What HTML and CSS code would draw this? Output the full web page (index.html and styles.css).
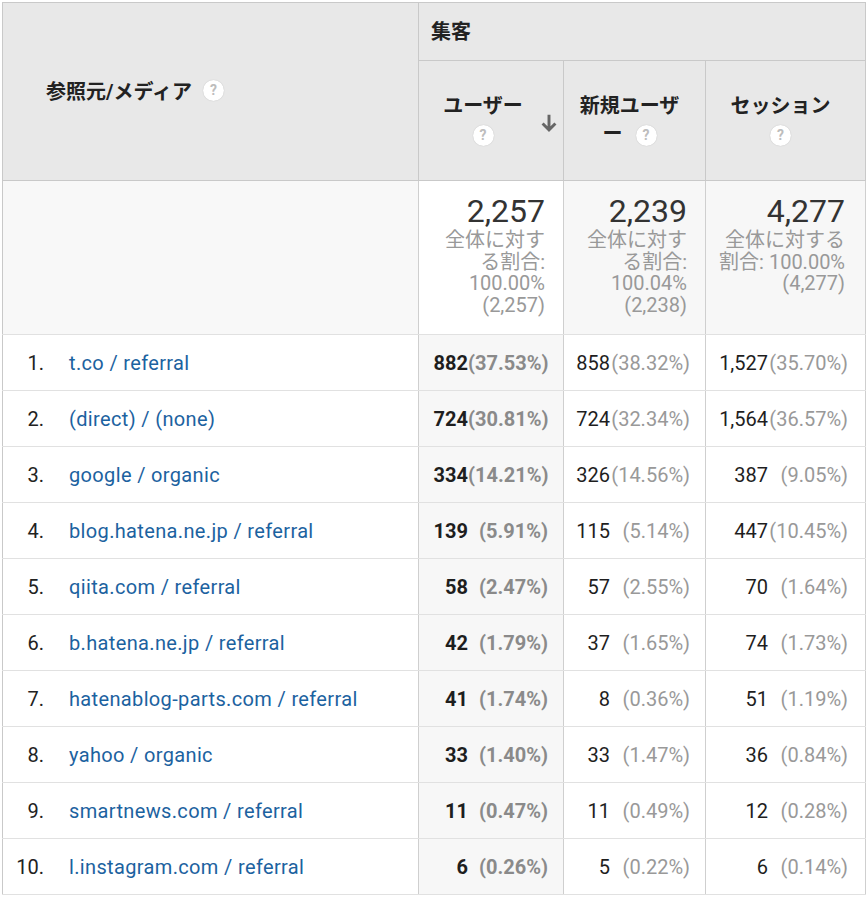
FILE: index.html
```html
<!DOCTYPE html>
<html lang="ja">
<head>
<meta charset="utf-8">
<title>参照元/メディア</title>
<link rel="stylesheet" href="styles.css">
</head>
<body>
<table class="report">
  <colgroup>
    <col class="col-dim">
    <col class="col-users">
    <col class="col-new">
    <col class="col-sessions">
  </colgroup>
  <thead>
    <tr class="head-group">
      <th class="head-dim" rowspan="2"><span class="head-label">参照元/メディア</span><span class="help">?</span></th>
      <th class="head-section" colspan="3">集客</th>
    </tr>
    <tr class="head-metrics">
      <th class="head-metric head-sorted">ユーザー<br><span class="help help-block">?</span><svg class="sort-arrow" viewBox="0 0 24 24" aria-hidden="true"><path d="M12 3V19.5M5 12.5L12 19.5l7-7"/></svg></th>
      <th class="head-metric">新規ユーザ<br>ー<span class="help help-inline">?</span></th>
      <th class="head-metric">セッション<br><span class="help help-block">?</span></th>
    </tr>
  </thead>
  <tbody>
    <tr class="totals">
      <td class="tot-dim"></td>
      <td class="tot-metric tot-sorted"><div class="tot-value">2,257</div><div class="tot-note">全体に対する割合: 100.00% (2,257)</div></td>
      <td class="tot-metric"><div class="tot-value">2,239</div><div class="tot-note">全体に対する割合: 100.04% (2,238)</div></td>
      <td class="tot-metric tot-last"><div class="tot-value">4,277</div><div class="tot-note">全体に対する割合: 100.00% (4,277)</div></td>
    </tr>
    <tr class="row">
      <td class="dim"><span class="rank">1.</span><a class="link" href="#">t.co / referral</a></td>
      <td class="metric sorted"><span class="val">882</span><span class="pct">(37.53%)</span></td>
      <td class="metric"><span class="val">858</span><span class="pct">(38.32%)</span></td>
      <td class="metric last"><span class="val">1,527</span><span class="pct">(35.70%)</span></td>
    </tr>
    <tr class="row">
      <td class="dim"><span class="rank">2.</span><a class="link" href="#">(direct) / (none)</a></td>
      <td class="metric sorted"><span class="val">724</span><span class="pct">(30.81%)</span></td>
      <td class="metric"><span class="val">724</span><span class="pct">(32.34%)</span></td>
      <td class="metric last"><span class="val">1,564</span><span class="pct">(36.57%)</span></td>
    </tr>
    <tr class="row">
      <td class="dim"><span class="rank">3.</span><a class="link" href="#">google / organic</a></td>
      <td class="metric sorted"><span class="val">334</span><span class="pct">(14.21%)</span></td>
      <td class="metric"><span class="val">326</span><span class="pct">(14.56%)</span></td>
      <td class="metric last"><span class="val">387</span><span class="pct">(9.05%)</span></td>
    </tr>
    <tr class="row">
      <td class="dim"><span class="rank">4.</span><a class="link" href="#">blog.hatena.ne.jp / referral</a></td>
      <td class="metric sorted"><span class="val">139</span><span class="pct">(5.91%)</span></td>
      <td class="metric"><span class="val">115</span><span class="pct">(5.14%)</span></td>
      <td class="metric last"><span class="val">447</span><span class="pct">(10.45%)</span></td>
    </tr>
    <tr class="row">
      <td class="dim"><span class="rank">5.</span><a class="link" href="#">qiita.com / referral</a></td>
      <td class="metric sorted"><span class="val">58</span><span class="pct">(2.47%)</span></td>
      <td class="metric"><span class="val">57</span><span class="pct">(2.55%)</span></td>
      <td class="metric last"><span class="val">70</span><span class="pct">(1.64%)</span></td>
    </tr>
    <tr class="row">
      <td class="dim"><span class="rank">6.</span><a class="link" href="#">b.hatena.ne.jp / referral</a></td>
      <td class="metric sorted"><span class="val">42</span><span class="pct">(1.79%)</span></td>
      <td class="metric"><span class="val">37</span><span class="pct">(1.65%)</span></td>
      <td class="metric last"><span class="val">74</span><span class="pct">(1.73%)</span></td>
    </tr>
    <tr class="row">
      <td class="dim"><span class="rank">7.</span><a class="link" href="#">hatenablog-parts.com / referral</a></td>
      <td class="metric sorted"><span class="val">41</span><span class="pct">(1.74%)</span></td>
      <td class="metric"><span class="val">8</span><span class="pct">(0.36%)</span></td>
      <td class="metric last"><span class="val">51</span><span class="pct">(1.19%)</span></td>
    </tr>
    <tr class="row">
      <td class="dim"><span class="rank">8.</span><a class="link" href="#">yahoo / organic</a></td>
      <td class="metric sorted"><span class="val">33</span><span class="pct">(1.40%)</span></td>
      <td class="metric"><span class="val">33</span><span class="pct">(1.47%)</span></td>
      <td class="metric last"><span class="val">36</span><span class="pct">(0.84%)</span></td>
    </tr>
    <tr class="row">
      <td class="dim"><span class="rank">9.</span><a class="link" href="#">smartnews.com / referral</a></td>
      <td class="metric sorted"><span class="val">11</span><span class="pct">(0.47%)</span></td>
      <td class="metric"><span class="val">11</span><span class="pct">(0.49%)</span></td>
      <td class="metric last"><span class="val">12</span><span class="pct">(0.28%)</span></td>
    </tr>
    <tr class="row">
      <td class="dim"><span class="rank">10.</span><a class="link" href="#">l.instagram.com / referral</a></td>
      <td class="metric sorted"><span class="val">6</span><span class="pct">(0.26%)</span></td>
      <td class="metric"><span class="val">5</span><span class="pct">(0.22%)</span></td>
      <td class="metric last"><span class="val">6</span><span class="pct">(0.14%)</span></td>
    </tr>
  </tbody>
</table>
</body>
</html>
```

FILE: styles.css
```css
html, body {
  background: #ffffff;
}

body {
  margin: 0;
  padding: 2px 0 0 2px;
  font-family: Roboto, "Noto Sans CJK JP", sans-serif;
  color: #222222;
}

.report {
  border-collapse: collapse;
  table-layout: fixed;
  width: 863px;
}

.col-dim { width: 416px; }
.col-users { width: 145px; }
.col-new { width: 142px; }
.col-sessions { width: 160px; }

/* ---------- header ---------- */
.report th {
  background: #e8e8e8;
  border: 1px solid #c9c9c9;
  font-size: 20px;
  font-weight: 700;
  color: #222222;
  padding: 0;
}

.head-group { height: 58px; }
.head-metrics { height: 120px; }

.head-dim {
  text-align: left;
  vertical-align: middle;
  padding: 0 0 3px 43px !important;
}

.head-label {
  vertical-align: middle;
}

.head-section {
  text-align: left;
  vertical-align: middle;
  padding: 0 0 2px 12px !important;
}

.head-metric {
  position: relative;
  text-align: center;
  vertical-align: middle;
  line-height: 28px;
  padding: 0 18px 2px 8px !important;
}

.head-sorted {
  padding: 0 26px 2px 10px !important;
}

.help {
  display: inline-block;
  width: 21px;
  height: 21px;
  border-radius: 50%;
  background: #ffffff;
  box-shadow: 0 0 1px rgba(0, 0, 0, 0.25);
  color: #bdbdbd;
  font-family: Roboto, sans-serif;
  font-size: 14px;
  font-weight: 700;
  line-height: 21px;
  text-align: center;
  vertical-align: middle;
  margin-left: 11px;
}

.help-block {
  margin-left: 0;
}

.help-inline {
  margin-left: 13px;
}

.sort-arrow {
  position: absolute;
  right: 3px;
  top: 50%;
  width: 22px;
  height: 22px;
  margin-top: -9px;
  fill: none;
  stroke: #666666;
  stroke-width: 3.2;
  stroke-linecap: butt;
  stroke-linejoin: miter;
}

/* ---------- totals ---------- */
.totals { height: 154px; }

.report td {
  padding: 0;
  border-left: none;
  border-top: none;
  border-right: 1px solid #cfcfcf;
  border-bottom: 1px solid #e1e1e1;
}

.report td.tot-dim,
.report td.dim {
  border-left: 1px solid #c9c9c9;
}

.tot-dim {
  background: #f8f8f8;
}

.tot-metric {
  background: #f7f7f7;
  vertical-align: top;
  text-align: right;
  padding: 11px 18px 0 12px !important;
}

.tot-sorted {
  background: #ffffff;
}

.tot-last {
  padding: 11px 20px 0 10px !important;
}

.tot-value {
  font-size: 32px;
  line-height: 38px;
  color: #333333;
}

.tot-note {
  font-size: 20px;
  line-height: 21.7px;
  color: #999999;
}

/* ---------- data rows ---------- */
.row { height: 56px; }

.dim {
  background: #ffffff;
  vertical-align: middle;
  font-size: 20px;
  padding-left: 11px !important;
  white-space: nowrap;
}

.rank {
  display: inline-block;
  width: 30px;
  text-align: right;
  margin-right: 25px;
  color: #222222;
}

.link {
  color: #1c62a0;
  text-decoration: none;
  letter-spacing: 0.35px;
}

.metric {
  background: #ffffff;
  vertical-align: middle;
  text-align: right;
  font-size: 20px;
  white-space: nowrap;
  padding-right: 15px !important;
}

.metric.last {
  padding-right: 17px !important;
}

.sorted {
  background: #f7f7f7;
  font-weight: 700;
}

.val {
  color: #1e1e1e;
}

.pct {
  display: inline-block;
  width: 80px;
  text-align: right;
  color: #999999;
}

.sorted .pct {
  color: #8a8a8a;
}
```
